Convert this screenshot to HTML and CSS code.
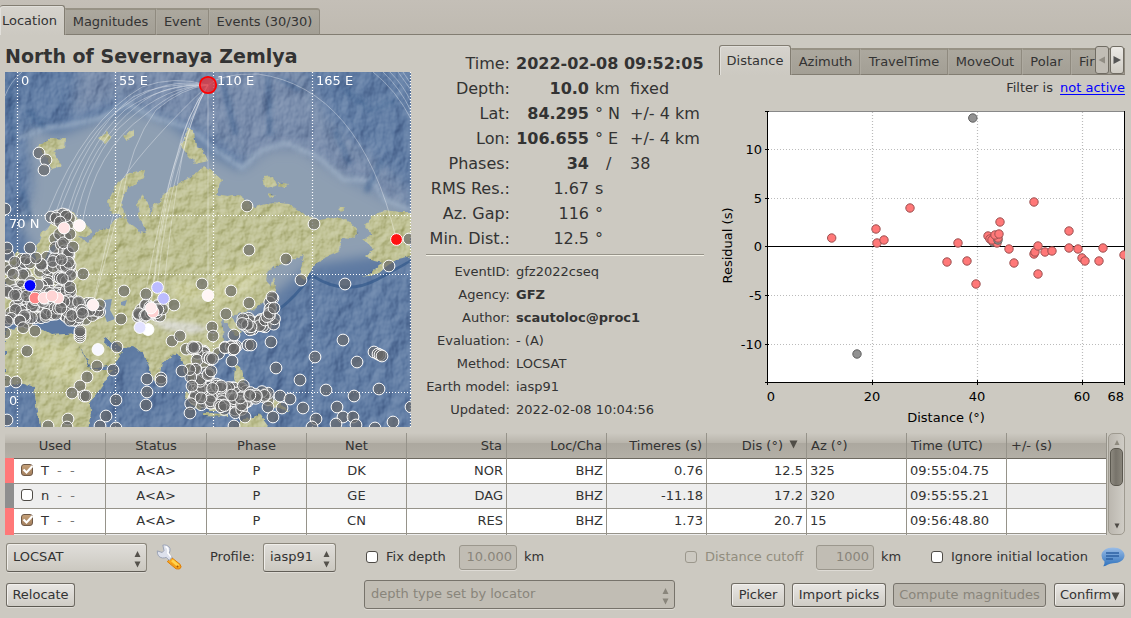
FILE: index.html
```html
<!DOCTYPE html>
<html lang="en">
<head>
<meta charset="utf-8">
<title>Origin locator</title>
<link rel="stylesheet" href="styles.css">
</head>
<body>
<div class="app">
  <nav class="tabs main-tabs">
    <div class="tab active t-loc">Location</div><div class="tab t-mag">Magnitudes</div><div class="tab t-ev">Event</div><div class="tab t-evs">Events (30/30)</div>
  </nav>

  <main class="upper">
    <section class="map-col">
      <h1>North of Severnaya Zemlya</h1>
      <svg class="map" viewBox="5 72 406 355" width="406" height="355">
        <defs>
          <filter id="soft" x="-20%" y="-20%" width="140%" height="140%"><feGaussianBlur stdDeviation="6"/></filter>
          <filter id="blur2" x="-10%" y="-10%" width="120%" height="120%"><feGaussianBlur stdDeviation="2"/></filter>
          <filter id="seaRelief" x="0" y="0" width="100%" height="100%" color-interpolation-filters="sRGB">
            <feTurbulence type="fractalNoise" baseFrequency="0.05 0.035" numOctaves="4" seed="8"/>
            <feDiffuseLighting surfaceScale="4" diffuseConstant="0.84" lighting-color="#fff"><feDistantLight azimuth="225" elevation="42"/></feDiffuseLighting>
          </filter>
          <filter id="landRelief" x="0" y="0" width="100%" height="100%" color-interpolation-filters="sRGB">
            <feTurbulence type="fractalNoise" baseFrequency="0.09" numOctaves="4" seed="3"/>
            <feDiffuseLighting surfaceScale="2.6" diffuseConstant="0.8" lighting-color="#fff"><feDistantLight azimuth="225" elevation="42"/></feDiffuseLighting>
          </filter>
          <filter id="coast" x="-5%" y="-5%" width="110%" height="110%">
            <feTurbulence type="fractalNoise" baseFrequency="0.16" numOctaves="3" seed="5" result="n"/>
            <feDisplacementMap in="SourceGraphic" in2="n" scale="5" xChannelSelector="R" yChannelSelector="G"/>
          </filter>
          <clipPath id="landClip"><use href="#land"/></clipPath>
          <mask id="deepMask" maskUnits="userSpaceOnUse" x="5" y="72" width="406" height="355"><path filter="url(#soft)" fill="#fff" d="M-20 40H440V208H411L380 190L345 172L318 155L286 141L262 148L242 166L215 148L190 126L155 116L128 102L100 116L70 123L45 126L28 140L30 215L20 240H-20ZM440 262H411L345 288L313 272L300 295L270 315L240 340L200 375L176 356L140 355L92 380V450H440ZM-20 387H34L40 450H-20Z"/></mask>
        </defs>
        <rect x="5" y="72" width="406" height="355" fill="#5e7aa2"/>
        <path filter="url(#soft)" fill="#7489a9" d="M80 60H300L330 120L411 190V225L345 185L250 165L200 130L120 100L70 115Z"/>
        <path filter="url(#soft)" fill="#8e9fb2" d="M28 130L60 135L95 122L135 110L170 124L205 152L240 170L270 150L300 150L345 178L380 196L411 212V250L330 262L310 265L250 315L225 345L205 365L190 330L60 300L20 225L32 190Z"/>
        <path filter="url(#blur2)" fill="none" stroke="#a9bbcf" stroke-width="4" opacity=".65" d="M18 138L45 128L70 125L100 118L128 104L155 118L190 128L215 150L242 168L262 150L286 143L318 157L344 180L372 180L385 200L411 210"/>
        <path filter="url(#blur2)" fill="none" stroke="#3f628f" stroke-width="5" opacity=".6" d="M8 74L14 140M28 110L45 128M22 190L30 218L12 222M222 80L236 135M268 75L270 135M280 78L300 90M345 90L370 110L395 100M335 130L350 165M366 192L382 160"/>
        <g mask="url(#deepMask)" style="mix-blend-mode:soft-light" opacity=".65"><rect x="5" y="72" width="406" height="355" filter="url(#seaRelief)"/></g>
        <path fill="none" stroke="#365b8c" stroke-width="3" opacity=".75" d="M278 310Q295 298 312 274M313 276Q345 297 378 279T411 260"/>
        <g filter="url(#coast)">
          <path id="land" fill="#bec092" d="M5 262L14 258L18 250L24 259L34 262L38 243L43 231L52 224L61 213L71 211L81 220L92 231L86 237L78 236L88 243L94 235L101 229L108 228L115 219L125 217L130 224L139 231L146 232L140 219L137 205L142 195L148 202L151 217L153 205L161 203L163 193L176 185L187 178L197 173L203 166L212 171L222 180L216 195L228 197L239 195L255 207L272 202L289 204L306 215L319 220L338 217L349 222L359 233L352 239L342 238L340 250L322 258L313 267L304 281L299 276L304 255L282 265L268 270L266 280L274 290L268 298L255 309L242 313L231 316L239 327L241 333L235 336L229 326L222 318L224 340L218 354L207 368L199 372L206 386L202 393L194 380L195 388L202 402L197 401L190 382L186 366L176 353L170 357L162 363L158 381L154 382L147 362L143 353L134 347L122 348L105 337L104 342L110 349L122 352L113 365L92 369L82 350L80 347L91 370L112 370L103 385L90 402L91 413L88 430H41L36 405L34 387L20 382L5 387V331L30 323L52 335L78 333L80 319L68 318L60 313L45 322L35 316L28 310L5 318ZM38 147L50 138L66 139L65 148L53 151L62 166L52 169L46 157ZM98 138L107 132L111 138L105 144ZM123 136L134 129L134 136L126 140ZM145 170L129 173L117 184L108 201L110 212L118 214L128 221L120 203L127 189L143 178ZM189 128L180 145L188 156L196 164L208 161L203 149L196 146L194 132ZM263 177L273 176L277 186L265 188ZM279 182L288 184L284 188L278 186ZM268 193L275 195L271 198ZM338 208L345 207L342 212ZM411 212L399 212L385 210L372 217L365 226L372 234L363 240L374 249L365 256L370 260L383 263L363 278L379 273L397 259L411 256ZM273 276L276 286L272 302L270 287ZM266 309L275 308L270 315L261 319L255 331L251 326L264 315ZM235 367L240 366L244 381L240 391L234 378ZM204 397L218 388L225 396L217 410L209 410ZM186 391L203 407L199 411L185 397ZM203 413L228 414V417L203 416ZM267 397L280 402L290 412L278 409L267 406ZM236 430L244 419L254 418L259 413L265 422L271 430Z"/>
        </g>
        <g clip-path="url(#landClip)">
          <path filter="url(#blur2)" fill="#dedeb0" opacity=".4" d="M20 340L75 345L90 390L50 375ZM215 270L270 260L250 290L210 310ZM170 280L205 284L200 300L175 300Z"/>
          <path filter="url(#blur2)" fill="#d9d9d4" opacity=".85" d="M150 322L166 320L200 324L208 331L193 334L168 331Z"/>
        </g>
        <g clip-path="url(#landClip)" style="mix-blend-mode:soft-light" opacity=".9"><rect x="5" y="72" width="406" height="355" filter="url(#landRelief)"/></g>
        <path fill="#7f96b2" d="M104 300L112 299L110 310L115 319L107 322L103 311ZM78 300L88 299L91 305L82 304ZM121 302l6-2-2 6-4-1ZM50 248l4-4 3-10-2 22 7 5-8 4-8 5-2-9ZM18 262l12-2-3 12-9-2Z"/>
        <g id="rays" class="rays"></g>
        <g class="grid"><path d="M17.5 72V427M115.5 72V427M213.5 72V427M312.5 72V427M410.5 72V427M5 215.5H411M5 274.5H411M5 392.5H411"/></g>
        <g class="map-labels"><text x="21" y="85">0</text><text x="119" y="85">55 E</text><text x="217" y="85">110 E</text><text x="316" y="85">165 E</text><text x="9" y="228">70 N</text><text x="9" y="405">0</text></g>
        <g id="stations"></g>
        <circle cx="208" cy="85" r="8.2" fill="#d93440" fill-opacity=".8" stroke="#f00" stroke-width="1.8"/>
      </svg>
    </section>

    <section class="details">
      <div class="big">
        <b>Time:</b><strong class="wide">2022-02-08 09:52:05</strong>
        <b>Depth:</b><strong>10.0</strong><i>km</i><i>fixed</i>
        <b>Lat:</b><strong>84.295</strong><i>° N</i><i>+/- 4 km</i>
        <b>Lon:</b><strong>106.655</strong><i>° E</i><i>+/- 4 km</i>
        <b>Phases:</b><strong>34</strong><i class="slash">/</i><i>38</i>
        <b>RMS Res.:</b><span>1.67</span><i>s</i><i></i>
        <b>Az. Gap:</b><span>116</span><i>°</i><i></i>
        <b>Min. Dist.:</b><span>12.5</span><i>°</i><i></i>
      </div>
      <div class="rule"></div>
      <div class="small">
        <b>EventID:</b><span>gfz2022cseq</span>
        <b>Agency:</b><strong>GFZ</strong>
        <b>Author:</b><strong>scautoloc@proc1</strong>
        <b>Evaluation:</b><span>- (A)</span>
        <b>Method:</b><span>LOCSAT</span>
        <b>Earth model:</b><span>iasp91</span>
        <b>Updated:</b><span>2022-02-08 10:04:56</span>
      </div>
    </section>

    <section class="plots">
      <nav class="tabs plot-tabs">
        <div class="tab active p1">Distance</div><div class="tab p2">Azimuth</div><div class="tab p3">TravelTime</div><div class="tab p4">MoveOut</div><div class="tab p5">Polar</div><div class="tab p6">Fir</div>
        <div class="scrollers"><span class="dim"><svg width="8" height="8"><path d="M7 .5V7.5L.5 4Z"/></svg></span><span><svg width="8" height="8"><path d="M.500 0V8L8 4Z"/></svg></span></div>
      </nav>
      <div class="filter">Filter is <a>not active</a></div>
      <svg class="chart" viewBox="719 100 406 328" width="406" height="328">
        <rect x="767" y="111" width="358" height="272" fill="#fff"/>
        <path class="dots" d="M768 149.5H1124M768 198.5H1124M768 295.5H1124M768 344.5H1124M872.5 112V382M977.5 112V382M1082.5 112V382"/>
        <path d="M768 111.5H1124" stroke="#888"/>
        <path class="axis" d="M767.5 111V385M1124.5 111V385M765 382.5H1125M765 246.5H1124M765 111.5H769M765 149.5H769M765 198.5H769M765 295.5H769M765 344.5H769M872.5 380V385M977.5 380V385M1082.5 380V385"/>
        <clipPath id="plotClip"><rect x="767" y="111" width="358" height="272"/></clipPath>
        <g id="points" clip-path="url(#plotClip)"></g>
        <g class="ticks" text-anchor="end"><text x="762" y="154">10</text><text x="762" y="203">5</text><text x="762" y="251">0</text><text x="762" y="300">-5</text><text x="762" y="349">-10</text><text x="1124" y="401">68</text></g>
        <g class="ticks" text-anchor="middle"><text x="771" y="401">0</text><text x="872" y="401">20</text><text x="977" y="401">40</text><text x="1082" y="401">60</text><text x="946" y="422">Distance (°)</text><text transform="translate(732 245.500) rotate(-90)">Residual (s)</text></g>
      </svg>
    </section>
  </main>

  <section class="arrivals">
    <div class="table">
      <div class="row head"><div class="c">Used</div><div class="c">Status</div><div class="c">Phase</div><div class="c">Net</div><div class="r">Sta</div><div class="r">Loc/Cha</div><div class="r">Timeres (s)</div><div class="r sorted">Dis (°) <svg width="9" height="9"><path d="M.5 .5H8.500L4.500 8.500Z"/></svg></div><div>Az (°)</div><div>Time (UTC)</div><div>+/- (s)</div></div>
      <div class="row"><div class="used red"><span class="check on"><svg viewBox="0 0 12 12"><path d="M2.500 5.500L5.500 8.500L11.500 2"/></svg></span>T<em>- &nbsp;-</em></div><div class="c">A&lt;A&gt;</div><div class="c">P</div><div class="c">DK</div><div class="r">NOR</div><div class="r">BHZ</div><div class="r">0.76</div><div class="r">12.5</div><div>325</div><div>09:55:04.75</div><div></div></div>
      <div class="row alt"><div class="used grey"><span class="check"></span>n<em>- &nbsp;-</em></div><div class="c">A&lt;A&gt;</div><div class="c">P</div><div class="c">GE</div><div class="r">DAG</div><div class="r">BHZ</div><div class="r">-11.18</div><div class="r">17.2</div><div>320</div><div>09:55:55.21</div><div></div></div>
      <div class="row"><div class="used red"><span class="check on"><svg viewBox="0 0 12 12"><path d="M2.500 5.500L5.500 8.500L11.500 2"/></svg></span>T<em>- &nbsp;-</em></div><div class="c">A&lt;A&gt;</div><div class="c">P</div><div class="c">CN</div><div class="r">RES</div><div class="r">BHZ</div><div class="r">1.73</div><div class="r">20.7</div><div>15</div><div>09:56:48.80</div><div></div></div>
      <div class="row alt"><div class="used red"></div><div></div><div></div><div></div><div></div><div></div><div></div><div></div><div></div><div></div><div></div></div>
    </div>
    <div class="scrollbar"><svg class="up" width="6" height="5"><path d="M3 0L5.500 5H.5Z"/></svg><div class="thumb"></div><svg class="down" width="6" height="6"><path d="M.5 .5H5.500L3 5.500Z"/></svg></div>
  </section>

  <div class="bar bar1">
    <div class="combo locator">LOCSAT<svg width="7" height="18"><path d="M3.500 1L6.500 7H.5ZM.5 11.500H6.500L3.500 17.500Z"/></svg></div>
    <svg class="wrench" width="26" height="26" viewBox="0 0 26 26">
      <path d="M15.500 13.500L24 20.300Q26.500 23.200 23.500 25L20 24.800L11.300 17.600Z" fill="#f9a61b" stroke="#dc7d08"/>
      <path d="M16 16.200L22.500 22" stroke="#ffd34d" stroke-width="2.800"/><path d="M15 19L19.500 22.800" stroke="#f09a18"/>
      <path d="M6.800 1.200L8 6.500L6.200 8.500L1.300 6.900Q1 13.200 6.500 14Q9 14 10.200 13.400L13.300 16.400L16.200 13.300L13 9.800Q16.200 3.400 10.500 1.300Q8.500 .5 6.800 1.200Z" fill="#dde1ec" stroke="#9ba3b5"/>
      <path d="M9.500 2.500Q13 4 11.800 9L15 13" fill="none" stroke="#fff" stroke-width="1.500"/><circle cx="21.500" cy="22.500" r="1" fill="#a95300"/>
    </svg>
    <span class="profile">Profile:</span>
    <div class="combo model">iasp91<svg width="7" height="18"><path d="M3.500 1L6.500 7H.5ZM.5 11.500H6.500L3.500 17.500Z"/></svg></div>
    <span class="check fix"></span><span class="lbl l1">Fix depth</span><div class="input">10.000</div><span class="km">km</span>
    <span class="check cut off"></span><span class="lbl l2">Distance cutoff</span><div class="input">1000</div><span class="km">km</span>
    <span class="check ign"></span><span class="lbl l3">Ignore initial location</span>
    <svg class="bubble" width="24" height="20" viewBox="0 0 24 20">
      <defs><linearGradient id="bg" x2="0" y2="1"><stop stop-color="#9bbde6"/><stop offset="1" stop-color="#2f72bd"/></linearGradient></defs>
      <path d="M12 .5C18.500 .5 23.500 4 23.500 8.500S18.500 16.200 12 16.200Q9 16.200 6.500 17.800Q4.500 19.500 2.300 19.200Q3.800 17.200 3.500 14.600Q.5 12 .5 8.500C.5 4 5.500 .5 12 .5Z" fill="url(#bg)"/>
      <path d="M5 6H18M5 9H18M5 12H12" stroke="#2c60a3" stroke-width="1.500"/>
    </svg>
  </div>

  <div class="bar bar2">
    <div class="btn b-rel">Relocate</div>
    <div class="combo off type">depth type set by locator<svg width="7" height="18"><path d="M3.500 1L6.500 7H.5ZM.5 11.500H6.500L3.500 17.500Z"/></svg></div>
    <div class="btn b-pick">Picker</div><div class="btn b-imp">Import picks</div><div class="btn b-mag off">Compute magnitudes</div>
    <div class="btn b-conf">Confirm<svg width="9" height="9"><path d="M.5 .5H8.500L4.500 8.500Z"/></svg></div>
  </div>
</div>
<script src="script.js"></script>
</body>
</html>
```

FILE: styles.css
```css
* { box-sizing: border-box; }
body { margin: 0; background: #ccc9c1; color: #333; font: 13px/16px "DejaVu Sans", Verdana, sans-serif; }
.app { width: 1131px; height: 618px; overflow: hidden; background: #ccc9c1; }
svg { display: block; flex: none; }

.tabs { display: flex; align-items: flex-end; }
.tab { height: 27px; margin-bottom: 0; border: 1px solid #8f8a7f; border-top: 2px solid #979285; border-left-color: #aeaaa0; background: linear-gradient(#aca89e, #a39f95); text-align: center; line-height: 24px; white-space: nowrap; border-bottom-color: #827d72; }
.tab.active { position: relative; height: 30px; background: linear-gradient(#d6d3cd, #ccc9c1); border: 1px solid #827d72; border-bottom: 0; border-radius: 3px 3px 0 0; line-height: 29px; box-shadow: inset 1px 1px #e1dfda; }
.main-tabs { height: 35px; background: linear-gradient(#c4bfb7, #bfbab1); border-bottom: 1px solid #827d72; }
.main-tabs .tab { margin-bottom: -1px; }
.t-loc { width: 65px; border-left: 0 !important; text-align: left; padding-left: 2px; }
.t-mag { width: 91px; }
.t-ev { width: 53px; }
.t-evs { width: 111px; border-top-right-radius: 3px; }

.upper { display: flex; height: 397px; }
.map-col { width: 426px; padding: 9px 0 0 5px; }
h1 { margin: 0; font-size: 19px; line-height: 24px; height: 28px; }
.map { overflow: hidden; isolation: isolate; }
.rays { fill: none; stroke: #fff; stroke-width: 1; stroke-opacity: .34; }
.grid { stroke: #fff; stroke-dasharray: 1 2; stroke-width: 1.2; fill: none; }
.map-labels { fill: #fff; font-size: 13px; }
.station { fill: #666; fill-opacity: .66; stroke: #fff; stroke-width: 1; }

.details { width: 288px; padding-top: 16px; }
.details b, .details i { font-weight: normal; font-style: normal; }
.big { display: grid; grid-template-columns: 84px 6px 73px 6px 35px 80px; grid-auto-rows: 25px; font-size: 16px; line-height: 25px; white-space: nowrap; }
.big b { grid-column: 1; text-align: right; }
.big strong, .big span { grid-column: 3; text-align: right; }
.big i { grid-column: 5; }
.big i + i { grid-column: 6; }
.big .wide { grid-column: 3 / 7; text-align: left; }
.slash { padding-left: 11px; }
.rule { width: 278px; height: 2px; margin-top: 3px; border-top: 1px solid #969389; border-bottom: 1px solid #f2f0e6; }
.small { display: grid; grid-template-columns: 84px 1fr; column-gap: 6px; padding-top: 4px; line-height: 23px; }
.small b { text-align: right; white-space: nowrap; }

.plots { width: 417px; padding: 10px 0 0 5px; }
.plot-tabs { position: relative; height: 30px; width: 406px; overflow: hidden; }
.p1 { width: 72px; }
.p2 { width: 69px; }
.p3 { width: 88px; }
.p4 { width: 74px; }
.p5 { width: 49px; }
.p6 { width: 54px; text-align: left; padding-left: 7px; }
.scrollers { position: absolute; right: 1px; top: 1px; display: flex; gap: 1px; }
.scrollers span { width: 14px; height: 28px; border: 1px solid #706c63; border-radius: 3px; background: linear-gradient(#eceae6, #cfccc4); display: grid; place-items: center; fill: #555; }
.scrollers .dim { background: #c1bdb5; fill: #918d84; }
.filter { height: 25px; line-height: 25px; text-align: right; padding-right: 6px; }
.filter a { color: #00f; text-decoration: underline; margin-left: 3px; text-underline-offset: 2px; }
.chart .dots { stroke: #bbb; stroke-dasharray: 1 2; stroke-width: 1.2; }
.chart .axis { stroke: #000; }
.ticks { font-size: 13px; fill: #000; }
.pt { fill: #ff7878; stroke: #9b5050; stroke-width: 1; }
.pt.grey { fill: #929292; stroke: #5f5f5f; }

.arrivals { display: flex; height: 103px; padding: 1px 0 0 5px; }
.table { width: 1102px; height: 102px; overflow: hidden; }
.row { display: grid; grid-template-columns: 101px 101px 100px 100px 100px 100px 100px 100px 100px 100px 100px; height: 25px; background: #fff; line-height: 25px; }
.row > div { border-right: 1px solid #96938a; border-bottom: 1px solid #96938a; padding: 0 3px; white-space: nowrap; }
.row.alt { background: #eee; }
.head { background: linear-gradient(#ccc9c1, #b9b5ac 38%, #aca89f 40%, #b3afa6); line-height: 25px; }
.head > div { border-bottom-color: #6e6a61; padding: 0 4px; }
.row .c { text-align: center; }
.row .r { text-align: right; }
.row > .sorted { display: flex; align-items: center; justify-content: flex-end; gap: 6px; padding-right: 8px; fill: #504d47; }
.sorted svg { margin-top: -2px; }
.row > .used { display: flex; align-items: center; border-left: 9px solid #ff7878; padding: 0 0 0 7px; gap: 8px; }
.row > .used.grey { border-left-color: #8e8e8e; }
.used em { font-style: normal; color: #777; }
.check { flex: none; width: 12px; height: 12px; border: 1px solid #4e4b46; border-radius: 3px; background: #fff; }
.used .check { margin-top: -1px; }
.check.on { background: linear-gradient(#c5a078, #a5815f); border-color: #6e5846; }
.check.on svg { width: 12px; height: 12px; margin: -1px; fill: none; stroke: #fff; stroke-width: 2.2; overflow: visible; }
.check.off { background: #ccc9c1; border-color: #9b978c; }
.scrollbar { width: 17px; height: 102px; margin-left: 1px; border: 1px solid #9e9a90; border-radius: 5px; background: linear-gradient(90deg, #bbb7af, #cfccc5); display: flex; flex-direction: column; align-items: center; fill: #4e4b46; }
.up { margin: 6px 0 3px; fill: #8d897e; }
.thumb { width: 13px; height: 38px; border: 1px solid #5b584f; border-radius: 5px; background: linear-gradient(90deg, #8d897f, #77736a 45%, #89857b); }
.down { margin: auto 0 5px; }

.bar { display: flex; align-items: center; white-space: nowrap; }
.bar1 { height: 44px; padding-left: 6px; }
.combo { display: flex; align-items: center; justify-content: space-between; height: 29px; padding: 0 5px 0 6px; border: 1px solid #8b877c; border-bottom-color: #615e57; border-radius: 3px; background: linear-gradient(#e0deda, #cbc8c0); box-shadow: 0 1px #dedbd5, inset 1px 1px #f0eeea; fill: #55524c; }
.combo svg { margin-top: 4px; }
.combo.off, .btn.off, .input { background: #c1bdb4; color: #89857b; border-color: #77736b; fill: #89857b; box-shadow: 0 1px #dedbd5; }
.locator { width: 141px; }
.wrench { margin-left: 9px; }
.profile { width: 53px; margin-left: 28px; }
.model { width: 73px; }
.fix { margin-left: 30px; }
.lbl { margin-left: 8px; }
.l1 { width: 73px; }
.bar1 .input { width: 58px; height: 25px; border: 1px solid #9b978d; border-radius: 3px; line-height: 22px; text-align: right; padding-right: 4px; }
.km { margin-left: 7px; width: 20px; }
.cut { margin-left: 141px; }
.l2 { width: 111px; color: #918d7e; }
.ign { margin-left: 30px; }
.l3 { width: 142px; }
.bubble { margin-left: 8px; }
.bar2 { height: 30px; padding-left: 6px; }
.bar2 .btn { margin-top: 1px; }
.btn { height: 24px; border: 1px solid #706c64; border-bottom-color: #5c5951; border-radius: 3px; background: linear-gradient(#e8e6e3, #cfccc5); box-shadow: inset 1px 1px #f2f0ed, 0 1px #dedbd5; text-align: center; line-height: 22px; }
.btn.off { background: #bbb7ae; box-shadow: 0 1px #dedbd5; }
.b-rel { width: 69px; }
.type { width: 311px; margin-left: 289px; }
.b-pick { width: 54px; margin-left: 56px; }
.b-imp { width: 94px; margin-left: 7px; }
.b-mag { width: 153px; margin-left: 7px; }
.b-conf { display: flex; align-items: center; width: 71px; margin-left: 8px; padding-left: 5px; fill: #504d47; }
.b-conf svg { margin: 4px 0 0; }
```

FILE: script.js
```js
const NS = 'http://www.w3.org/2000/svg';
function add(parent, name, attrs) {
  const el = document.createElementNS(NS, name);
  for (const k in attrs) el.setAttribute(k, attrs[k]);
  parent.appendChild(el);
}

// Great-circle rays from the epicentre to the picked stations
const rays = [
  'Q174 75 142 87Q85 120 48 212', 'Q165 77 130 102Q83 130 56 212', 'Q160 82 133 97Q86 132 55 225',
  'Q162 84 125 110Q85 145 64 226', 'Q165 83 138 105Q92 140 70 216', 'Q166 86 128 120Q90 150 73 230',
  'Q180 85 145 115Q95 150 82 224', 'Q182 88 156 110Q130 145 122 200Q102 270 94 304',
  'Q185 118 177 155Q160 210 151 307', 'Q188 112 179 150Q160 205 140 326', 'Q192 112 181 160Q164 215 157 287',
  'Q191 115 182 158Q170 220 163 298', 'Q190 115 175 166Q160 225 148 330', 'L208 295',
  'Q222 73 258 74Q360 88 396 238', 'Q150 140 122 180Q116 200 93 304'
];
const rg = document.getElementById('rays');
rays.forEach(r => add(rg, 'path', { d: 'M208 85' + r }));
['M5 96Q10 82 22 72', 'M373 72Q396 90 411 119', 'M383 72Q400 88 411 111', 'M390 72Q404 86 411 102', 'M398 72L411 90', 'M403 72L411 84'].forEach(d => add(rg, 'path', { d }));

// Regional networks: [x, y, width, height, count]
const networks = [
  [5, 252, 66, 45, 58], [5, 290, 66, 30, 85], [7, 315, 30, 13, 10], [52, 214, 20, 70, 32], [70, 303, 30, 20, 22], [58, 300, 26, 22, 18],
  [136, 304, 28, 15, 26], [188, 384, 60, 22, 72], [210, 385, 36, 28, 26], [246, 391, 24, 9, 14],
  [185, 342, 20, 16, 10], [189, 358, 20, 24, 13], [242, 318, 28, 12, 22], [266, 297, 9, 30, 10], [207, 348, 18, 12, 5], [225, 344, 15, 8, 7]
];
let seed = 71;
const rnd = () => (seed = (seed * 16807) % 2147483647) / 2147483647;
const st = document.getElementById('stations');
const dot = (x, y, extra) => add(st, 'circle', Object.assign({ class: 'station', cx: x.toFixed(1), cy: y.toFixed(1), r: 5.9 }, extra));
networks.forEach(([x, y, w, h, n]) => { for (let i = 0; i < n; i++) dot(x + rnd() * w, y + rnd() * h); });

const single = [
  39,153, 46,160, 44,170, 5,209, 51,217, 56,218, 66,216, 60,222, 70,234, 73,247, 30,248, 7,248, 26,259, 36,258, 5,333, 35,331,
  247,206, 314,224, 249,250, 409,239, 83,274, 70,287, 124,291, 146,294, 174,305, 121,319, 202,284, 27,351, 117,347,
  97,366, 113,370, 87,377, 80,386, 72,393, 84,396, 86,396, 6,381, 16,382, 116,400, 147,379, 161,378, 161,381, 147,392, 146,405,
  106,416, 68,419, 100,426, 48,426, 7,420, 67,427, 116,428, 190,413, 172,341, 180,336, 182,371, 192,386, 201,398,
  286,259, 389,266, 301,280, 345,284, 231,291, 249,303, 272,297, 274,308, 226,314, 212,327, 213,336, 234,335,
  271,342, 343,340, 315,357, 357,362, 276,368, 232,361, 300,380, 326,390, 379,389, 354,396, 374,352, 378,354, 380,355, 382,356,
  303,408, 280,396, 290,399, 316,419, 337,407, 343,417, 353,417, 411,407, 393,422, 356,425, 336,424, 375,428, 312,427,
  268,407, 282,408, 273,417, 245,417, 234,426, 248,345, 251,345, 211,371, 234,349, 234,349, 80,337, 80,335, 80,333, 80,331
];
for (let i = 0; i < single.length; i += 2) dot(single[i], single[i + 1]);

const coloured = [
  [64,228,'#ffe4e4'], [79.5,225.500,'#fff5f5'], [38,285,'#888'], [30,285.500,'#00f'], [35,298,'#ff8585'], [58,298,'#ffdada'], [44,298,'#ffdcdc'],
  [52,296,'#ffd4d4'], [93,305,'#fff0f0'], [98,349.500,'#f7f7ff'], [157.500,287.500,'#bcbcff'], [163.500,298.500,'#bcbcff'], [153,312,'#ffd0d0'], [151,308,'#ffecec'],
  [148,329.500,'#fff'], [140,327.500,'#e2e2ff'], [208,295.500,'#fff5f5'], [396.500,239.500,'#f11']
];
coloured.forEach(([x, y, c]) => dot(x, y, { style: 'fill-opacity:1;fill:' + c }));

// Travel-time residuals
const points = [
  [972.800,118,1], [857,354,1], [993,242,1], [831.700,238], [876,229], [877,243], [884,240], [910,208], [958,243], [947,262], [967,261], [976,284],
  [1034,202], [1000,222], [988,236], [990,239], [997,243], [992,240], [998,240,1], [998,238], [995,235], [999,234], [1009,249], [1014,263],
  [1034,254], [1035,252], [1038,246], [1045,252], [1052,251], [1038,274], [1069,231], [1069,248], [1078,249], [1082,258], [1085,261], [1099,261], [1103,248], [1124,255]
];
const pg = document.getElementById('points');
points.forEach(([x, y, g]) => add(pg, 'circle', { class: g ? 'pt grey' : 'pt', cx: x, cy: y, r: 4.2 }));
```
